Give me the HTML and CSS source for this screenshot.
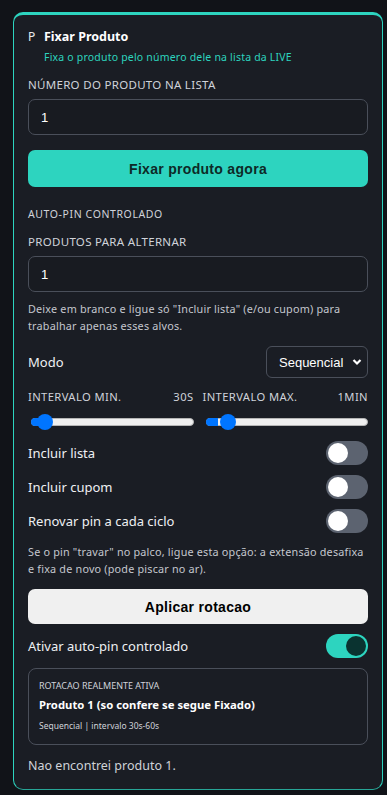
FILE: index.html
```html
<!DOCTYPE html>
<html lang="pt-BR">
<head>
<meta charset="utf-8">
<link rel="stylesheet" href="styles.css">
</head>
<body>
<div class="card">
  <div class="head">
    <span class="mark">P</span>
    <div class="head-text">
      <div class="title">Fixar Produto</div>
      <div class="subtitle">Fixa o produto pelo número dele na lista da LIVE</div>
    </div>
  </div>

  <label class="label lab-num">NÚMERO DO PRODUTO NA LISTA</label>
  <input class="field" type="text" value="1">
  <button class="btn btn-primary">Fixar produto agora</button>

  <div class="section">AUTO-PIN CONTROLADO</div>
  <label class="label lab-alt">PRODUTOS PARA ALTERNAR</label>
  <input class="field" type="text" value="1">
  <p class="help">Deixe em branco e ligue só "Incluir lista" (e/ou cupom) para trabalhar apenas esses alvos.</p>

  <div class="row mode-row">
    <span class="row-label">Modo</span>
    <div class="select">Sequencial
      <svg width="10" height="8" viewBox="0 0 10 8"><path d="M1.5 2 L5 5.5 L8.5 2" fill="none" stroke="#fff" stroke-width="2.2"/></svg>
    </div>
  </div>

  <div class="ranges">
    <div class="range">
      <div class="range-head"><span>INTERVALO MIN.</span><span>30S</span></div>
      <div class="slider"><span class="thumb thumb1"></span></div>
    </div>
    <div class="range">
      <div class="range-head"><span>INTERVALO MAX.</span><span>1MIN</span></div>
      <div class="slider"><span class="thumb thumb2"></span></div>
    </div>
  </div>

  <div class="row toggle-row first-toggle"><span class="row-label">Incluir lista</span><span class="toggle"></span></div>
  <div class="row toggle-row"><span class="row-label">Incluir cupom</span><span class="toggle"></span></div>
  <div class="row toggle-row"><span class="row-label">Renovar pin a cada ciclo</span><span class="toggle"></span></div>
  <p class="help help2">Se o pin "travar" no palco, ligue esta opção: a extensão desafixa e fixa de novo (pode piscar no ar).</p>

  <button class="btn btn-light">Aplicar rotacao</button>

  <div class="row toggle-row on-row"><span class="row-label">Ativar auto-pin controlado</span><span class="toggle on"></span></div>

  <div class="status">
    <div class="status-cap">ROTACAO REALMENTE ATIVA</div>
    <div class="status-main">Produto 1 (so confere se segue Fixado)</div>
    <div class="status-sub">Sequencial | intervalo 30s-60s</div>
  </div>

  <p class="msg">Nao encontrei produto 1.</p>
</div>
</body>
</html>
```

FILE: styles.css
```css
* { box-sizing: border-box; }
html, body { margin: 0; padding: 0; }
body {
  background: #111318;
  font-family: "Noto Sans", "Open Sans", sans-serif;
  color: #e8eaee;
  padding: 12px 4px 0 13px;
}
.card {
  background: #1a1d24;
  border: 1px solid #2dd4bf;
  border-bottom-color: #27a596;
  border-top-width: 3px;
  border-radius: 10px;
  padding: 13px 14px 10px 14px;
  display: flex;
  flex-direction: column;
  height: 778px;
}
.head { display: flex; align-items: flex-start; }
.mark {
  width: 16px;
  font-size: 12px;
  line-height: 18px;
  color: #e8eaee;
}
.head-text { display: flex; flex-direction: column; }
.title { font-size: 12.5px; font-weight: 700; line-height: 18px; color: #fff; }
.subtitle { font-size: 10.5px; line-height: 16px; color: #2dd4bf; margin-top: 3px; letter-spacing: 0.2px; }

.label {
  font-size: 11.5px;
  color: #d0d3da;
  line-height: 16px;
  display: block;
  letter-spacing: 0.3px;
}
.lab-num { margin-top: 12px; }
.lab-alt { margin-top: 12px; }
.field {
  margin-top: 6px;
  height: 36px;
  width: 100%;
  background: #181b21;
  border: 1px solid #4a4f5a;
  border-radius: 7px;
  color: #fff;
  font-family: "Liberation Sans", Arial, sans-serif;
  font-size: 13px;
  padding: 0 12px;
  outline: none;
}
.btn {
  width: 100%;
  border: none;
  border-radius: 7px;
  font-family: "Liberation Sans", Arial, sans-serif;
  font-weight: 700;
  font-size: 14px;
  letter-spacing: 0.3px;
}
.btn-primary {
  margin-top: 15px;
  height: 37px;
  background: #2dd4bf;
  color: #0d2a27;
}
.btn-light {
  margin-top: 12px;
  height: 35px;
  background: #f0f0f0;
  color: #000;
}
.section {
  margin-top: 19px;
  font-size: 10.5px;
  letter-spacing: 0.6px;
  color: #d0d3da;
  line-height: 16px;
}
.help {
  margin: 8px 0 0;
  font-size: 10.8px;
  letter-spacing: 0.2px;
  line-height: 17px;
  color: #c4c7ce;
}
.row {
  display: flex;
  justify-content: space-between;
  align-items: center;
}
.row-label { font-size: 13px; color: #eef0f3; }
.mode-row { margin-top: 12px; }
.select {
  width: 102px;
  height: 32px;
  border: 1px solid #4a4f5a;
  border-radius: 6px;
  display: flex;
  align-items: center;
  justify-content: space-between;
  padding: 0 5px 0 12px;
  font-family: "Liberation Sans", Arial, sans-serif;
  font-size: 13px;
  color: #fff;
}
.ranges {
  margin-top: 11px;
  display: grid;
  grid-template-columns: 1fr 1fr;
  gap: 9px;
}
.range-head {
  display: flex;
  justify-content: space-between;
  font-size: 11.2px;
  line-height: 15px;
  color: #d0d3da;
  letter-spacing: 0.4px;
}
.slider {
  position: relative;
  margin: 14px 0 0 3px;
  height: 8px;
  background: #efefef;
  border: 1px solid #b5b5b5;
  border-radius: 4px;
}
.slider::before {
  content: "";
  position: absolute;
  left: -1px; top: -1px;
  height: 8px;
  width: 12px;
  background: #0075ff;
  border-radius: 4px 0 0 4px;
}
.thumb {
  position: absolute;
  top: -5px;
  width: 16px;
  height: 16px;
  border-radius: 50%;
  background: #0075ff;
}
.thumb1 { left: 5px; }
.thumb2 { left: 13px; }
.toggle-row { height: 34px; }
.first-toggle { margin-top: 10px; }
.toggle {
  position: relative;
  width: 42px;
  height: 24px;
  border-radius: 12px;
  background: #5c6370;
}
.toggle::after {
  content: "";
  position: absolute;
  left: 2px; top: 2px;
  width: 20px; height: 20px;
  border-radius: 50%;
  background: #fff;
}
.toggle.on { background: #2dd4bf; }
.toggle.on::after { left: 20px; background: #0a3330; }
.help2 { margin-top: 5px; }
.on-row { margin-top: 5px; }
.status {
  margin-top: 5px;
  border: 1px solid #4a4f5a;
  border-radius: 8px;
  padding: 10px 10px 11px 10px;
}
.status-cap { font-size: 9px; line-height: 14px; color: #d0d3da; }
.status-main { font-size: 11.3px; font-weight: 700; color: #fff; line-height: 18px; margin-top: 3px; }
.status-sub { font-size: 8.5px; line-height: 14px; color: #d0d3da; margin-top: 5px; }
.msg { margin: 12px 0 0; font-size: 12.5px; color: #cfd2d8; line-height: 18px; }
```
